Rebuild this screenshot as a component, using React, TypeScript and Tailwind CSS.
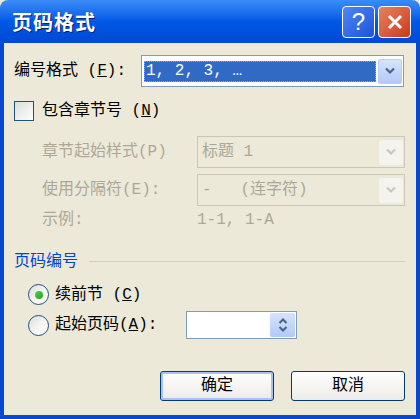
const font = { fontFamily: '"Liberation Mono", "Noto Sans CJK SC", monospace' };

function Arrow({ disabled }: { disabled?: boolean }) {
  return (
    <div
      className={
        'flex h-[25px] w-[24px] items-center justify-center rounded-[2px] border ' +
        (disabled
          ? 'border-[#f4f3ee] bg-[#f4f3ee]'
          : 'border-[#b9cdf6] bg-gradient-to-b from-[#d6e3fd] to-[#b3c9f7]')
      }
    >
      <svg width="10" height="8" viewBox="0 0 10 8">
        <path d="M1 1.5 L5 5.5 L9 1.5" fill="none" stroke={disabled ? '#c9c7ba' : '#4d6185'} strokeWidth="2.2" />
      </svg>
    </div>
  );
}

function Radio({ checked }: { checked?: boolean }) {
  return (
    <div className="flex h-[21px] w-[21px] items-center justify-center rounded-full border border-[#1c5180] bg-gradient-to-br from-[#dcdcd7] via-[#f4f4f0] to-white">
      {checked && <div className="h-[8px] w-[8px] rounded-full bg-gradient-to-br from-[#55d051] to-[#21a121]" />}
    </div>
  );
}

export default function App() {
  return (
    <div className="flex h-[419px] w-[420px] flex-col bg-[#ece9d8]" style={font}>
      {/* title bar */}
      <div className="flex h-[43px] items-center rounded-t-[8px] bg-gradient-to-b from-[#3b8cf7] via-[#0058e6] to-[#0049d4] pl-[12px] pr-[9px]">
        <span className="text-[20px] font-bold tracking-[1px] text-white [text-shadow:1px_1px_0_#0a1e6e]" style={{ fontFamily: '"Noto Sans CJK SC", sans-serif' }}>
          页码格式
        </span>
        <div className="ml-auto flex gap-[3px]">
          <div className="flex h-[32px] w-[33px] items-center justify-center rounded-[4px] border border-white bg-gradient-to-br from-[#4f86f7] to-[#1f53d8] text-[24px] leading-none text-white" style={{ fontFamily: '"Liberation Sans", sans-serif' }}>
            ?
          </div>
          <div className="flex h-[32px] w-[33px] items-center justify-center rounded-[4px] border border-white bg-gradient-to-br from-[#e8805e] to-[#c9381a]">
            <svg width="18" height="18" viewBox="0 0 18 18">
              <path d="M3 3 L15 15 M15 3 L3 15" stroke="white" strokeWidth="3" />
            </svg>
          </div>
        </div>
      </div>

      {/* body */}
      <div className="flex flex-1 flex-col border-x-4 border-b-4 border-[#0847d0] pl-[10px] pr-[11px] text-[16px] text-black">
        {/* number format */}
        <div className="mt-[12px] flex h-[32px] items-center">
          <span className="w-[127px]">
            编号格式 (<u>F</u>):
          </span>
          <div className="flex h-[32px] w-[263px] items-center border border-[#7f9db9] bg-white pl-[2px] pr-[1px]">
            <div className="mr-[2px] flex h-[21px] flex-1 items-center border border-dotted border-[#c3a86a] bg-[#316ac5] pl-[1px] text-white">
              1, 2, 3, …
            </div>
            <Arrow />
          </div>
        </div>

        {/* include chapter */}
        <div className="mt-[14px] flex h-[20px] items-center">
          <div className="h-[20px] w-[20px] border border-[#1c5180] bg-gradient-to-br from-[#dcdcd7] to-white" />
          <span className="ml-[8px]">
            包含章节号 (<u>N</u>)
          </span>
        </div>

        <div className="pl-[28px] text-[#aca899]">
          <div className="mt-[15px] flex h-[32px] items-center">
            <span className="w-[155px]">章节起始样式(P)</span>
            <div className="flex h-[32px] w-[208px] items-center border border-[#c9c7ba] pl-[4px] pr-[1px]">
              <span className="flex-1">标题 1</span>
              <Arrow disabled />
            </div>
          </div>
          <div className="mt-[6px] flex h-[32px] items-center">
            <span className="w-[155px]">使用分隔符(E):</span>
            <div className="flex h-[32px] w-[208px] items-center border border-[#c9c7ba] pl-[4px] pr-[1px]">
              <span className="flex-1">-&nbsp;&nbsp;&nbsp;(连字符)</span>
              <Arrow disabled />
            </div>
          </div>
          <div className="mt-[5px] flex h-[18px] items-center">
            <span className="w-[155px]">示例:</span>
            <span>1-1, 1-A</span>
          </div>
        </div>

        {/* page numbering group */}
        <div className="mt-[24px] flex h-[18px] items-center">
          <span className="text-[#0046d5]">页码编号</span>
          <div className="ml-[11px] h-[2px] flex-1 border-t border-[#d0d0bf] border-b-white" />
        </div>

        <div className="mt-[13px] flex h-[21px] items-center pl-[14px]">
          <Radio checked />
          <span className="ml-[6px]">
            续前节 (<u>C</u>)
          </span>
        </div>

        <div className="mt-[6px] flex h-[28px] items-center pl-[14px]">
          <Radio />
          <span className="ml-[6px] w-[131px]">
            起始页码(<u>A</u>):
          </span>
          <div className="flex h-[28px] w-[111px] items-center justify-end border border-[#7f9db9] bg-white pr-[1px]">
            <div className="flex h-[24px] w-[25px] items-center justify-center rounded-[2px] bg-gradient-to-b from-[#d6e3fd] to-[#b3c9f7]">
              <svg width="10" height="16" viewBox="0 0 10 16">
                <path d="M1.5 6 L5 2.5 L8.5 6 M1.5 10 L5 13.5 L8.5 10" fill="none" stroke="#4d6185" strokeWidth="2" />
              </svg>
            </div>
          </div>
        </div>

        {/* buttons */}
        <div className="mt-[32px] flex justify-end gap-[17px]">
          <button className="flex h-[30px] w-[114px] items-center justify-center rounded-[3px] border border-[#003c74] bg-gradient-to-b from-white to-[#ecebe6] text-[16px] shadow-[inset_0_0_0_2px_#a9c2f2]">
            确定
          </button>
          <button className="flex h-[30px] w-[114px] items-center justify-center rounded-[3px] border border-[#003c74] bg-gradient-to-b from-white to-[#ecebe6] text-[16px]">
            取消
          </button>
        </div>
      </div>
    </div>
  );
}
